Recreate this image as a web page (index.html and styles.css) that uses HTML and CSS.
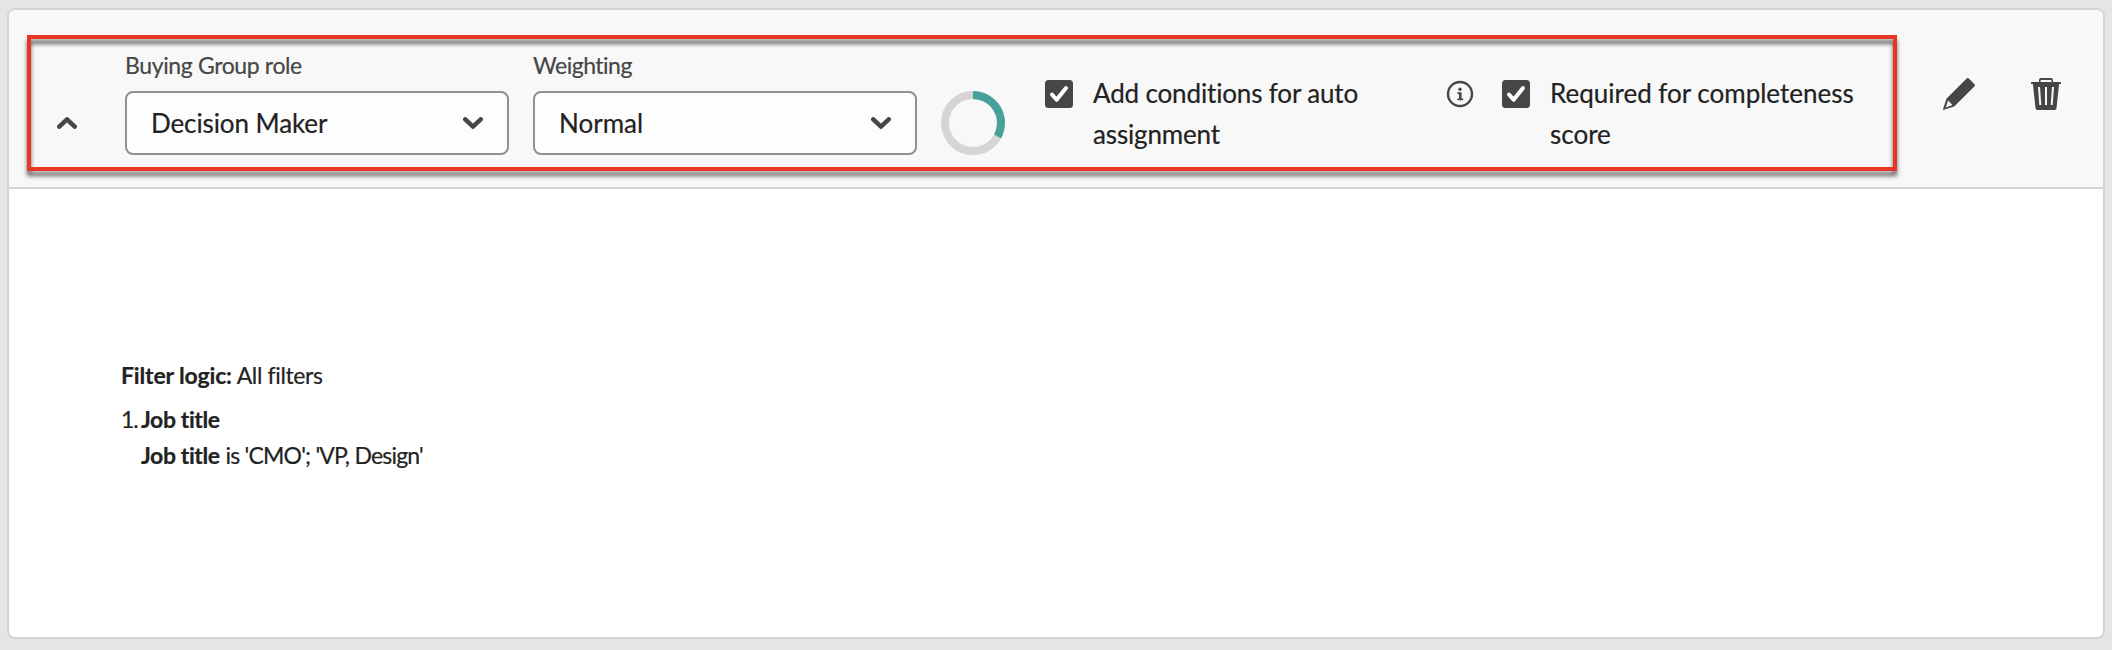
FILE: index.html
```html
<!DOCTYPE html>
<html lang="en">
<head>
<meta charset="utf-8">
<title>Buying group role</title>
<link rel="stylesheet" href="styles.css">
</head>
<body>
<main class="card">
  <header class="card-header">
    <svg class="toggle" width="20" height="12" viewBox="0 0 20 12"><path d="M2.3 9.7 10 2.3l7.7 7.4"/></svg>
    <div class="field field-role">
      <span class="label label-role">Buying Group role</span>
      <div class="select"><span class="value-role">Decision Maker</span>
        <svg class="chevron" width="20" height="12" viewBox="0 0 20 12"><path d="M2.3 2.3 10 9.7l7.7-7.4"/></svg>
      </div>
    </div>
    <div class="field">
      <span class="label">Weighting</span>
      <div class="select"><span>Normal</span>
        <svg class="chevron" width="20" height="12" viewBox="0 0 20 12"><path d="M2.3 2.3 10 9.7l7.7-7.4"/></svg>
      </div>
    </div>
    <svg class="ring" width="64" height="64" viewBox="0 0 64 64">
      <circle class="ring-track" cx="32" cy="32" r="28"/>
      <path class="ring-fill" d="M32 4A28 28 0 0 1 56.6 45.3"/>
    </svg>
    <div class="check check-auto">
      <svg class="box" width="28" height="28" viewBox="0 0 28 28"><rect width="28" height="28" rx="3.500"/><path d="M7 14.500l4.600 5.300L21 8"/></svg>
      <span class="check-text auto-text">Add conditions for auto assignment</span>
    </div>
    <svg class="info" width="28" height="28" viewBox="0 0 28 28">
      <circle class="info-ring" cx="14" cy="14" r="12"/>
      <circle class="info-dot" cx="14" cy="9.3" r="1.7"/>
      <path class="info-stem" d="M11.4 12.3h4.200v6.200h1.500v1.700h-5.700v-1.700h1.600V14h-1.600z"/>
    </svg>
    <div class="check check-required">
      <svg class="box" width="28" height="28" viewBox="0 0 28 28"><rect width="28" height="28" rx="3.500"/><path d="M7 14.500l4.600 5.300L21 8"/></svg>
      <span class="check-text">Required for completeness score</span>
    </div>
    <div class="actions">
      <svg width="32" height="32" viewBox="0 0 32 32"><path fill-rule="evenodd" d="M23.4.7a2 2 0 0 1 2.700 0l5.200 5.200a2 2 0 0 1 0 2.700L11.200 28.600.9 31.800a.6.6 0 0 1-.8-.8L3.400 20.800zM5.100 22.600 2.700 29.400l6.700-2.300z"/></svg>
      <svg width="30" height="32" viewBox="0 0 30 32"><path fill-rule="evenodd" d="M8 4V2a2 2 0 0 1 2-2h10a2 2 0 0 1 2 2v2h7.200a.8.8 0 0 1 .8.8V6h-1.900l-2.600 24.300a2 2 0 0 1-2 1.700h-17a2 2 0 0 1-2-1.700L1.900 6H0V4.800A.8.8 0 0 1 .8 4zM9.600 4h10.800V2H9.600zM7 9l1.300 18h2L9 9zM14 9v18h2V9zM21 9l-1.300 18h2L23 9z"/></svg>
    </div>
  </header>
  <section class="card-body">
    <p class="logic"><b>Filter logic:</b> All filters</p>
    <div class="filter">
      <span class="number">1.</span>
      <div class="filter-text"><b>Job title</b><br><b>Job title</b> <span class="rule">is 'CMO'; 'VP, Design'</span></div>
    </div>
  </section>
</main>
<div class="highlight"></div>
</body>
</html>
```
FILE: styles.css
```css
* { box-sizing: border-box; }

body {
  margin: 0;
  padding: 8px 7px 11px;
  height: 650px;
  background: #e5e5e5;
  color: #222;
  font: 26px/41px Lato, "Open Sans", sans-serif;
  font-variant-ligatures: none;
  -webkit-text-stroke: 0.2px currentColor;
  overflow: hidden;
}

svg { display: block; flex: none; }

.card {
  height: 631px;
  border: 2px solid #d4d4d4;
  border-radius: 8px;
  background: #fff;
  overflow: hidden;
}

.card-header {
  display: flex;
  align-items: flex-start;
  height: 179px;
  padding: 40px 42px 0 48px;
  border-bottom: 2px solid #d4d4d4;
  background: #f8f8f8;
}

.toggle { margin: 67px 48px 0 0; }

.toggle path, .chevron path {
  fill: none;
  stroke: #464646;
  stroke-width: 4.4;
  stroke-linecap: round;
  stroke-linejoin: round;
}

.field { width: 384px; margin-right: 24px; flex: none; }

.label {
  display: block;
  height: 41px;
  color: #464646;
  font-size: 23px;
  line-height: 31px;
  letter-spacing: -0.5px;
}

.label-role { letter-spacing: -0.37px; }

.select {
  display: flex;
  align-items: center;
  justify-content: space-between;
  height: 64px;
  padding: 0 24px;
  border: 2px solid #909090;
  border-radius: 8px;
  background: #fdfdfd;
}

.select span { padding-top: 1px; }
.value-role { letter-spacing: -0.1px; }

.ring { margin-top: 41px; }
.ring circle, .ring path { fill: none; stroke-width: 8; }
.ring .ring-track { stroke: #d5d5d5; }
.ring .ring-fill { stroke: #47a19b; }

.check { display: flex; flex: none; gap: 20px; margin-top: 23px; }
.check-auto { width: 362px; margin-left: 40px; }
.check-required { width: 360px; margin-left: 28px; }
.check-text { flex: 1; }
.auto-text { padding-right: 40px; letter-spacing: -0.15px; }

.box { margin-top: 7px; }
.box rect { fill: #464646; }
.box path {
  fill: none;
  stroke: #fff;
  stroke-width: 4;
  stroke-linecap: round;
  stroke-linejoin: round;
}

.info { margin: 30px 0 0 39px; }
.info-ring { fill: none; stroke: #464646; stroke-width: 2.4; }
.info-dot, .info-stem { fill: #464646; }

.actions { display: flex; gap: 56px; margin: 28px 0 0 auto; }
.actions path { fill: #464646; }

.card-body {
  padding: 168px 112px 0;
  font-size: 23px;
  line-height: 36px;
}

.logic { margin: 0 0 8px; letter-spacing: -0.35px; }
.logic b { letter-spacing: -0.15px; }
.filter { display: flex; }
.number { width: 20px; flex: none; letter-spacing: -1px; }
.filter-text b { letter-spacing: -0.4px; }
.rule { letter-spacing: -0.8px; }

/* Callout frame drawn over the role settings */
.highlight {
  position: absolute;
  left: 27px;
  top: 35px;
  width: 1870px;
  height: 136px;
  border: 4px solid #e73625;
  filter: drop-shadow(0 5px 2px rgba(0, 0, 0, 0.6));
  pointer-events: none;
}
```
